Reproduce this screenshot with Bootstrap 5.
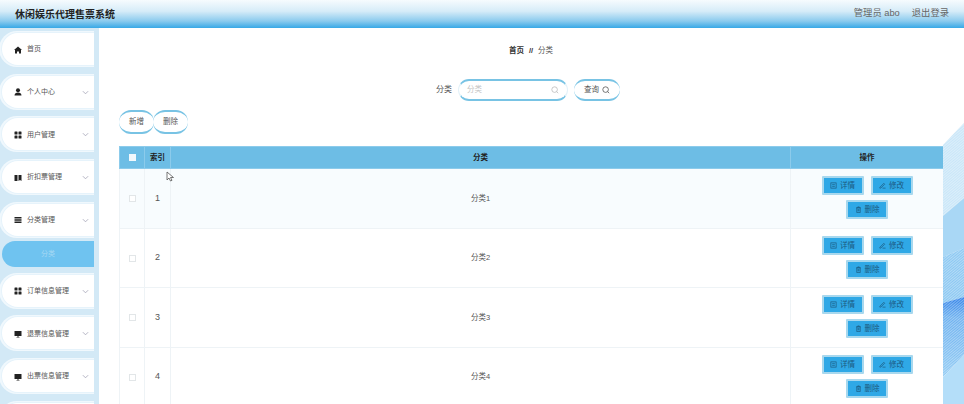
<!DOCTYPE html>
<html lang="zh"><head><meta charset="utf-8">
<link href="https://cdn.jsdelivr.net/npm/bootstrap@5.3.0/dist/css/bootstrap.min.css" rel="stylesheet">
<script src="https://cdn.jsdelivr.net/npm/bootstrap@5.3.0/dist/js/bootstrap.bundle.min.js"></script>
<style>
html,body{height:404px;overflow:hidden}
body{font-family:"Liberation Sans","Noto Sans CJK SC",sans-serif;font-size:8px;color:#555;background:#fff;width:964px}
.topbar{height:28px;background:linear-gradient(#f6fbfe 0%,#d6ecf8 40%,#8ccbee 75%,#37a8e6 100%);padding:0 15px}
.brand{font-size:10px;font-weight:700;color:#222}
.userinfo{font-size:9.3px;color:#666;gap:12px}
.shell{height:376px}
.sidenav{width:99px;flex:none;background:#d3e9f6;padding:5px 5px 0 0;gap:10.7px;overflow:hidden;font-size:7px}
.pill{height:32px;flex:none;background:#fff;border-radius:17px 0 0 17px;box-shadow:0 0 0 1px #e6f3fb,-1px 0 0 2px #f0f8fd;clip-path:inset(-3px 0 -3px -3px);margin-left:2px;padding:1px 5px 0 12px;color:#555}
.pill svg.ic{width:8px;height:8px;margin-right:5px;flex:none;fill:#222}
.pill .chev{margin-left:auto;width:7px;height:7px;fill:none;stroke:#aab;stroke-width:1}
.subpill{height:26px;flex:none;margin:-5.7px 0 -2.7px 2px;padding-top:1px;background:#6fc3f0;border-radius:13px 0 0 13px;color:#a5d8f3}
.content{flex:1;min-width:0;position:relative;padding:0 21px 0 20px}
.strip{position:absolute;right:0;top:95px;width:21px;height:281px;display:block}
.crumbs{height:46px;gap:5px;font-size:7.5px;color:#555}
.crumbs b{color:#333}
.searchrow{height:31px;gap:6px;margin-left:-6px}
.searchrow .lbl{font-size:8px;color:#555}
.sinput{width:110px;height:22px;border-radius:12px;background:#fff;border-top:2px solid #78c3e4;border-bottom:2px solid #78c3e4;border-left:1px solid #e4f2f9;border-right:1px solid #e4f2f9;padding:0 8px;color:#c4c4c4;font-size:7.5px}
.ovalbtn{height:22px;border-radius:12px;background:#fff;border:0;border-top:2px solid #78c3e4;border-bottom:2px solid #78c3e4;padding:0 10px;color:#555;font-size:7.5px;gap:3px}
.tools{height:24px;margin-top:5px;margin-bottom:12px}
.tools .ovalbtn{width:35px;justify-content:center;height:24px;padding:0}
.tools .ovalbtn + .ovalbtn{margin-left:-1px}
.datatable{table-layout:fixed;width:824px;margin:0;font-size:7.5px;color:#555;border-collapse:collapse}
.datatable th,.datatable td{padding:0;border:1px solid #eef3f6;text-align:center;vertical-align:middle;background:transparent;box-shadow:none}
.datatable thead th{height:22px;background:#6dbde5;color:#222;font-weight:700;border-color:#8ccbeb}
.datatable tbody tr{height:59.5px}
.datatable tbody tr.odd td{background:#f8fcfe}
.tick{display:inline-block;width:7px;height:7px;border:1px solid #e2e6e8;background:#fff;vertical-align:middle}
th .tick{background:#f2f8fc;border-color:#f2f8fc}
.idx{font-size:9px}
.acts{gap:5px 7px;width:110px;margin:-1px auto 0}
.actbtn{width:42px;height:19px;padding:0;background:#2fa8e6;border:2px solid #a8d8ee;border-radius:1px;color:#1c5a80;font-size:7.5px;gap:3px}
.actbtn svg{width:7px;height:7px;fill:none;stroke:#1c5a80;stroke-width:.8}
.cursor{position:absolute;left:67px;top:143px;width:9px;height:12px}
</style></head><body>
<header class="topbar d-flex align-items-center justify-content-between">
<div class="brand">休闲娱乐代理售票系统</div>
<div class="userinfo d-flex"><span>管理员 abo</span><span>退出登录</span></div>
</header>
<div class="shell d-flex">
<nav class="sidenav d-flex flex-column">
<div class="pill d-flex align-items-center"><svg class="ic" viewBox="0 0 16 16"><path d="M8 1 0 8h2v7h4v-4h4v4h4V8h2z"/></svg>首页</div>
<div class="pill d-flex align-items-center"><svg class="ic" viewBox="0 0 16 16"><circle cx="8" cy="4.500" r="4"/><path d="M1 15c0-4 3-6 7-6s7 2 7 6z"/></svg>个人中心<svg class="chev" viewBox="0 0 8 8"><path d="M1 2.500 4 5.500 7 2.500"/></svg></div>
<div class="pill d-flex align-items-center"><svg class="ic" viewBox="0 0 16 16"><rect x="1" y="1" width="6" height="6" rx="1"/><rect x="9" y="1" width="6" height="6" rx="1"/><rect x="1" y="9" width="6" height="6" rx="1"/><rect x="9" y="9" width="6" height="6" rx="1"/></svg>用户管理<svg class="chev" viewBox="0 0 8 8"><path d="M1 2.500 4 5.500 7 2.500"/></svg></div>
<div class="pill d-flex align-items-center"><svg class="ic" viewBox="0 0 16 16"><path d="M1 2h6v12H1zM9 2h6v12l-3-2-3 2z"/></svg>折扣票管理<svg class="chev" viewBox="0 0 8 8"><path d="M1 2.500 4 5.500 7 2.500"/></svg></div>
<div class="pill d-flex align-items-center"><svg class="ic" viewBox="0 0 16 16"><path d="M1 2h14v3H1zM1 6.500h14v3H1zM1 11h14v3H1z"/></svg>分类管理<svg class="chev" viewBox="0 0 8 8"><path d="M1 2.500 4 5.500 7 2.500"/></svg></div>
<div class="subpill d-flex align-items-center justify-content-center">分类</div>
<div class="pill d-flex align-items-center"><svg class="ic" viewBox="0 0 16 16"><rect x="1" y="1" width="6" height="6" rx="1"/><rect x="9" y="1" width="6" height="6" rx="1"/><rect x="1" y="9" width="6" height="6" rx="1"/><rect x="9" y="9" width="6" height="6" rx="1"/></svg>订单信息管理<svg class="chev" viewBox="0 0 8 8"><path d="M1 2.500 4 5.500 7 2.500"/></svg></div>
<div class="pill d-flex align-items-center"><svg class="ic" viewBox="0 0 16 16"><path d="M1 2h14v10H9v2h2v1H5v-1h2v-2H1z"/></svg>退票信息管理<svg class="chev" viewBox="0 0 8 8"><path d="M1 2.500 4 5.500 7 2.500"/></svg></div>
<div class="pill d-flex align-items-center"><svg class="ic" viewBox="0 0 16 16"><path d="M1 2h14v10H9v2h2v1H5v-1h2v-2H1z"/></svg>出票信息管理<svg class="chev" viewBox="0 0 8 8"><path d="M1 2.500 4 5.500 7 2.500"/></svg></div>
<div class="pill"></div>
</nav>
<main class="content">
<svg class="strip" viewBox="0 0 21 281" preserveAspectRatio="none">
<defs>
<pattern id="hatch" width="2" height="2" patternUnits="userSpaceOnUse" patternTransform="rotate(-40)"><rect width="2" height="1" fill="#fff" fill-opacity=".35"/></pattern>
<linearGradient id="deep" x1="0" y1="0" x2="0" y2="1"><stop offset="0" stop-color="#2f80e8"/><stop offset=".25" stop-color="#6cb0ef"/><stop offset="1" stop-color="#93ccf4"/></linearGradient>
</defs>
<polygon points="0,22 21,0 21,75 0,93" fill="#c9e6f8"/>
<polygon points="0,93 21,75 21,125 0,134" fill="#a9d7f5"/>
<polygon points="0,134 21,125 21,174 0,180" fill="#8cc8f2"/>
<polygon points="0,180 21,174 21,232 0,254" fill="url(#deep)"/>
<polygon points="0,254 21,232 21,281 0,281" fill="#b4def9"/>
<polygon points="0,22 21,0 21,75 0,93" fill="url(#hatch)"/>
<polygon points="0,134 21,125 21,232 0,254" fill="url(#hatch)"/>
</svg>
<div class="crumbs d-flex align-items-center justify-content-center"><b>首页</b><b>//</b><span>分类</span></div>
<div class="searchrow d-flex align-items-center justify-content-center">
<span class="lbl">分类</span>
<div class="sinput d-flex align-items-center justify-content-between"><span>分类</span><svg width="8" height="8" viewBox="0 0 10 10" fill="none" stroke="#bbb"><circle cx="4.500" cy="4.500" r="3.500"/><path d="M7 7l2 2"/></svg></div>
<button class="ovalbtn d-flex align-items-center" type="button">查询<svg width="8" height="8" viewBox="0 0 10 10" fill="none" stroke="#555"><circle cx="4.500" cy="4.500" r="3.500"/><path d="M7 7l2 2"/></svg></button>
</div>
<div class="tools d-flex align-items-center">
<button class="ovalbtn d-flex align-items-center" type="button">新增</button>
<button class="ovalbtn d-flex align-items-center" type="button">删除</button>
</div>
<table class="table datatable">
<colgroup><col style="width:25px"><col style="width:26px"><col style="width:620px"><col style="width:153px"></colgroup>
<thead><tr><th><span class="tick"></span></th><th>索引</th><th>分类</th><th>操作</th></tr></thead>
<tbody>
<tr class="odd"><td><span class="tick"></span></td><td class="idx">1</td><td>分类1</td><td><div class="acts d-flex flex-wrap justify-content-center">
<button class="actbtn d-flex align-items-center justify-content-center" type="button"><svg viewBox="0 0 8 8"><rect x="1" y="1" width="6" height="6"/><path d="M2.500 3h3M2.500 5h3"/></svg>详情</button>
<button class="actbtn d-flex align-items-center justify-content-center" type="button"><svg viewBox="0 0 8 8"><path d="M1 6 5.500 1.500 6.500 2.500 2 7H1zM4 7h3.500"/></svg>修改</button>
<button class="actbtn d-flex align-items-center justify-content-center" type="button"><svg viewBox="0 0 8 8"><path d="M2 2h4v5.500H2zM1.500 2h5M3 1h2M3.500 3.500v2.500M4.500 3.500v2.500"/></svg>删除</button></div></td></tr>
<tr><td><span class="tick"></span></td><td class="idx">2</td><td>分类2</td><td><div class="acts d-flex flex-wrap justify-content-center">
<button class="actbtn d-flex align-items-center justify-content-center" type="button"><svg viewBox="0 0 8 8"><rect x="1" y="1" width="6" height="6"/><path d="M2.500 3h3M2.500 5h3"/></svg>详情</button>
<button class="actbtn d-flex align-items-center justify-content-center" type="button"><svg viewBox="0 0 8 8"><path d="M1 6 5.500 1.500 6.500 2.500 2 7H1zM4 7h3.500"/></svg>修改</button>
<button class="actbtn d-flex align-items-center justify-content-center" type="button"><svg viewBox="0 0 8 8"><path d="M2 2h4v5.500H2zM1.500 2h5M3 1h2M3.500 3.500v2.500M4.500 3.500v2.500"/></svg>删除</button></div></td></tr>
<tr><td><span class="tick"></span></td><td class="idx">3</td><td>分类3</td><td><div class="acts d-flex flex-wrap justify-content-center">
<button class="actbtn d-flex align-items-center justify-content-center" type="button"><svg viewBox="0 0 8 8"><rect x="1" y="1" width="6" height="6"/><path d="M2.500 3h3M2.500 5h3"/></svg>详情</button>
<button class="actbtn d-flex align-items-center justify-content-center" type="button"><svg viewBox="0 0 8 8"><path d="M1 6 5.500 1.500 6.500 2.500 2 7H1zM4 7h3.500"/></svg>修改</button>
<button class="actbtn d-flex align-items-center justify-content-center" type="button"><svg viewBox="0 0 8 8"><path d="M2 2h4v5.500H2zM1.500 2h5M3 1h2M3.500 3.500v2.500M4.500 3.500v2.500"/></svg>删除</button></div></td></tr>
<tr><td><span class="tick"></span></td><td class="idx">4</td><td>分类4</td><td><div class="acts d-flex flex-wrap justify-content-center">
<button class="actbtn d-flex align-items-center justify-content-center" type="button"><svg viewBox="0 0 8 8"><rect x="1" y="1" width="6" height="6"/><path d="M2.500 3h3M2.500 5h3"/></svg>详情</button>
<button class="actbtn d-flex align-items-center justify-content-center" type="button"><svg viewBox="0 0 8 8"><path d="M1 6 5.500 1.500 6.500 2.500 2 7H1zM4 7h3.500"/></svg>修改</button>
<button class="actbtn d-flex align-items-center justify-content-center" type="button"><svg viewBox="0 0 8 8"><path d="M2 2h4v5.500H2zM1.500 2h5M3 1h2M3.500 3.500v2.500M4.500 3.500v2.500"/></svg>删除</button></div></td></tr>
</tbody></table>
<svg class="cursor" viewBox="0 0 9 12" fill="#fff" stroke="#555" stroke-width=".8"><path d="M1 1v8l2-2 1.500 3 1.500-.7L4.500 6.500H7.500z"/></svg>
</main>
</div>
</body></html>
